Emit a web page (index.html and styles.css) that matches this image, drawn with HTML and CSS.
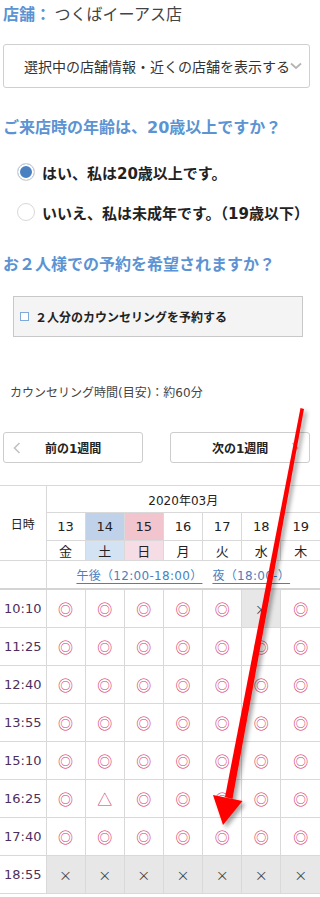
FILE: index.html
```html
<!DOCTYPE html>
<html lang="ja">
<head>
  <meta charset="UTF-8">
  <title>予約</title>
  <link rel="stylesheet" href="styles.css">
</head>
<body>
  <div class="container">
    <div class="store"><span class="store-label">店舗：</span> つくばイーアス店</div>

    <div class="store-select">
      <span>選択中の店舗情報・近くの店舗を表示する</span>
      <svg class="chev" width="12" height="8" viewBox="0 0 12 8"><path d="M1 1.5 L6 6 L11 1.5" fill="none" stroke="#b5b5b5" stroke-width="1.8"/></svg>
    </div>

    <h2 class="question q1">ご来店時の年齢は、20歳以上ですか？</h2>
    <div class="radios">
      <label class="radio"><span class="dot checked"></span>はい、私は20歳以上です。</label>
      <label class="radio"><span class="dot"></span>いいえ、私は未成年です。（19歳以下）</label>
    </div>

    <h2 class="question q2">お２人様での予約を希望されますか？</h2>
    <div class="pair-box">
      <span class="check"></span>２人分のカウンセリングを予約する
    </div>

    <p class="note">カウンセリング時間(目安)：約60分</p>

    <div class="week-nav">
      <div class="week-btn prev">
        <svg class="arrow-l" width="8" height="12" viewBox="0 0 8 12"><path d="M6.5 1 L1.5 6 L6.5 11" fill="none" stroke="#c2c2c2" stroke-width="1.6"/></svg>
        前の1週間
      </div>
      <div class="week-btn next">
        次の1週間
        <svg class="arrow-r" width="8" height="12" viewBox="0 0 8 12"><path d="M1.5 1 L6.5 6 L1.5 11" fill="none" stroke="#c2c2c2" stroke-width="1.6"/></svg>
      </div>
    </div>
  </div>

  <table class="calendar">
    <colgroup>
      <col class="col-time">
      <col><col><col><col><col><col><col>
    </colgroup>
    <thead>
      <tr class="row-month">
        <th rowspan="3" class="head-time">日時</th>
        <th colspan="7">2020年03月</th>
      </tr>
      <tr class="row-date">
        <th>13</th><th class="sat">14</th><th class="sun">15</th><th>16</th><th>17</th><th>18</th><th>19</th>
      </tr>
      <tr class="row-day">
        <th>金</th><th class="sat">土</th><th class="sun">日</th><th>月</th><th>火</th><th>水</th><th>木</th>
      </tr>
      <tr class="row-links">
        <th></th>
        <th colspan="7"><a href="#">午後（12:00-18:00）</a><a href="#" class="night">夜（18:00-）</a></th>
      </tr>
    </thead>
    <tbody>
      <tr><td class="time">10:10</td><td class="ok">◎</td><td class="ok">◎</td><td class="ok">◎</td><td class="ok">◎</td><td class="ok">◎</td><td class="ng">×</td><td class="ok">◎</td></tr>
      <tr><td class="time">11:25</td><td class="ok">◎</td><td class="ok">◎</td><td class="ok">◎</td><td class="ok">◎</td><td class="ok">◎</td><td class="ok">◎</td><td class="ok">◎</td></tr>
      <tr><td class="time">12:40</td><td class="ok">◎</td><td class="ok">◎</td><td class="ok">◎</td><td class="ok">◎</td><td class="ok">◎</td><td class="ok">◎</td><td class="ok">◎</td></tr>
      <tr><td class="time">13:55</td><td class="ok">◎</td><td class="ok">◎</td><td class="ok">◎</td><td class="ok">◎</td><td class="ok">◎</td><td class="ok">◎</td><td class="ok">◎</td></tr>
      <tr><td class="time">15:10</td><td class="ok">◎</td><td class="ok">◎</td><td class="ok">◎</td><td class="ok">◎</td><td class="ok">◎</td><td class="ok">◎</td><td class="ok">◎</td></tr>
      <tr><td class="time">16:25</td><td class="ok">◎</td><td class="few">△</td><td class="ok">◎</td><td class="ok">◎</td><td class="ok">◎</td><td class="ok">◎</td><td class="ok">◎</td></tr>
      <tr><td class="time">17:40</td><td class="ok">◎</td><td class="ok">◎</td><td class="ok">◎</td><td class="ok">◎</td><td class="ok">◎</td><td class="ok">◎</td><td class="ok">◎</td></tr>
      <tr><td class="time">18:55</td><td class="ng">×</td><td class="ng">×</td><td class="ng">×</td><td class="ng">×</td><td class="ng">×</td><td class="ng">×</td><td class="ng">×</td></tr>
    </tbody>
  </table>

  <!-- annotation arrow drawn over the page -->
  <svg class="annotation" width="320" height="897" viewBox="0 0 320 897">
    <defs>
      <filter id="shadow" x="-50%" y="-10%" width="200%" height="120%">
        <feDropShadow dx="3" dy="3" stdDeviation="2" flood-color="#000" flood-opacity="0.35"/>
      </filter>
    </defs>
    <g filter="url(#shadow)" fill="#ff0000">
      <polygon points="300.5,408 304,409 232.5,799 225,797"/>
      <polygon points="213,795 242.5,801 223,825"/>
    </g>
  </svg>
</body>
</html>
```

FILE: styles.css
```css
body {
  margin: 0;
  font-family: "DejaVu Sans", "Noto Sans CJK JP", sans-serif;
  color: #333;
  position: relative;
  width: 320px;
  overflow: hidden;
}
.container {
  padding: 0 10px 0 3px;
}
.store {
  height: 26px;
  line-height: 26px;
  font-size: 16px;
  font-family: "Noto Sans CJK JP", sans-serif;
  color: #444;
}
.store-label {
  color: #5b93d3;
  font-weight: bold;
}
.store-select {
  margin-top: 18px;
  height: 44px;
  box-sizing: border-box;
  border: 1px solid #cfcfcf;
  border-radius: 3px;
  display: flex;
  align-items: center;
  padding-left: 20px;
  font-size: 14px;
  font-family: "Noto Sans CJK JP", sans-serif;
  color: #333;
  white-space: nowrap;
  overflow: hidden;
}
.chev {
  flex: none;
}
.question {
  margin: 0;
  font-size: 16px;
  line-height: 24px;
  font-weight: bold;
  color: #5b93d3;
  white-space: nowrap;
}
.q1 {
  margin-top: 28px;
}
.q2 {
  margin-top: 21px;
}
.radios {
  margin-top: 12px;
}
.radio {
  display: flex;
  align-items: center;
  height: 40px;
  padding-left: 14px;
  font-size: 15px;
  font-weight: bold;
  color: #222;
  white-space: nowrap;
}
.dot {
  flex: none;
  width: 18px;
  height: 18px;
  box-sizing: border-box;
  border: 1px solid #d8d8d8;
  border-radius: 50%;
  margin-right: 7px;
  background: #fff;
}
.dot.checked {
  background: #4a80c0;
  box-shadow: inset 0 0 0 2px #fff;
}
.pair-box {
  margin: 19px 7px 0 10px;
  height: 41px;
  box-sizing: border-box;
  border: 1px solid #c8c8c8;
  background: #f4f4f4;
  display: flex;
  align-items: center;
  padding-left: 6px;
  font-size: 12px;
  font-weight: bold;
  color: #222;
}
.check {
  flex: none;
  width: 9px;
  height: 9px;
  box-sizing: border-box;
  border: 1px solid #7fa9db;
  background: #fff;
  margin-right: 6px;
}
.note {
  margin: 47px 0 0 7px;
  font-size: 12px;
  line-height: 18px;
  color: #444;
}
.week-nav {
  margin-top: 30px;
  display: flex;
  justify-content: space-between;
}
.week-btn {
  width: 140px;
  height: 31px;
  box-sizing: border-box;
  border: 1px solid #cdcdcd;
  border-radius: 3px;
  display: flex;
  align-items: center;
  font-size: 12px;
  font-weight: bold;
  color: #222;
}
.week-btn.prev {
  padding-left: 9px;
}
.week-btn.prev .arrow-l {
  margin-right: 24px;
}
.week-btn.next {
  padding-left: 41px;
}
.week-btn.next .arrow-r {
  margin-left: 23px;
}
.calendar {
  margin-top: 22px;
  width: 320px;
  border-collapse: collapse;
  table-layout: fixed;
  font-size: 12px;
  color: #222;
}
.col-time {
  width: 46px;
}
.calendar th,
.calendar td {
  border: 1px solid #d9d9d9;
  text-align: center;
  padding: 0;
  font-weight: normal;
}
.calendar tr > :first-child {
  border-left: none;
}
.calendar tr > :last-child {
  border-right: none;
}
.row-month th {
  height: 26px;
}
.row-month .head-time {
  border-left: none;
}
.row-date th {
  height: 27px;
  font-size: 13px;
}
.row-day th {
  height: 19px;
  font-size: 13px;
  font-family: "Noto Sans CJK JP", sans-serif;
}
.row-date .sat {
  background: #bfd2ea;
}
.row-date .sun {
  background: #f1c4ce;
}
.row-day .sat {
  background: #d4e3f3;
}
.row-day .sun {
  background: #f6dce5;
}
.row-links th {
  height: 27px;
  border-bottom: 2px solid #d4d4d4;
}
.row-links a {
  color: #4a7fc0;
  text-underline-offset: 3px;
  letter-spacing: 0.3px;
}
.row-links .night {
  margin-left: 10px;
}
.calendar td {
  height: 37px;
}
.time {
  font-size: 13px;
  color: #4d2f5d;
}
.ok,
.few {
  color: #d3376c;
  font-size: 15px;
  font-family: "Noto Sans CJK JP", sans-serif;
}
.ng {
  background: #e7e7e7;
  color: #444;
  font-size: 13px;
  font-family: "Noto Sans CJK JP", sans-serif;
}
.annotation {
  position: absolute;
  top: 0;
  left: 0;
  pointer-events: none;
}
```
